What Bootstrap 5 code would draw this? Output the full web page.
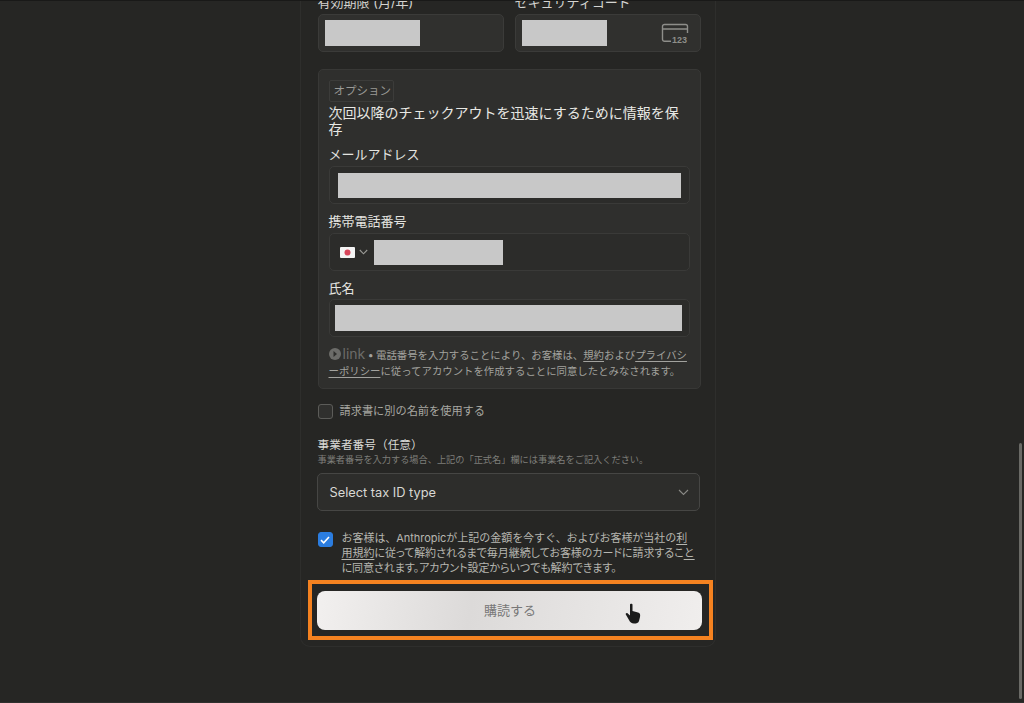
<!DOCTYPE html>
<html lang="ja">
<head>
<meta charset="utf-8">
<title>購読する</title>
<link href="https://cdn.jsdelivr.net/npm/bootstrap@5.3.0/dist/css/bootstrap.min.css" rel="stylesheet">
<style>
html,body{height:703px;overflow:hidden;background:#262624;}
body{font-family:"Inter","Noto Sans CJK JP",sans-serif;color:#dcdcd8;}
.viewport{height:703px;overflow:hidden;position:relative;padding-right:9px;border-top:1px solid #191918;border-bottom:1px solid #30302e;}
.pay-panel{width:416px;height:653px;margin-top:-7px;padding:0 15px 0 17px;border:1px solid #2e2e2c;border-top:0;border-radius:0 0 10px 10px;flex:none;}
.f-label{font-size:13px;line-height:16px;margin-bottom:4px;color:#d4d4d0;height:16px;white-space:nowrap;}
.field{height:38px;background:#30302e;border:1px solid #3b3b39;border-radius:5px;display:flex;align-items:center;}
.half{width:186px;padding-left:6px;}
.two-col{gap:11px;}
.redact{background:#c8c8c8;height:26px;}
.r1{width:95px;}.r2{width:85px;}
.card-ico{width:28px;height:20px;margin-right:11px;}
.opt-box{margin-top:17px;height:320px;padding:10px 10px;background:#2f2f2d;border:1px solid #383836;border-radius:5px;width:383px;}
.opt-tag{display:block;height:22px;line-height:20px;font-size:11.5px;padding:0 4px;width:65px;border:1px solid #3c3c3a;border-radius:2px;color:#9a9a96;white-space:nowrap;}
.opt-title{font-size:14px;line-height:16px;margin-top:3px;color:#e8e8e4;}
.inner-label{font-size:13px;line-height:16px;height:16px;color:#e4e4e0;white-space:nowrap;}
.inner-field{height:38px;background:#2c2c2a;border:1px solid #3a3a38;border-radius:5px;display:flex;align-items:center;width:361px;}
.m-a{margin-top:9px;margin-bottom:4px;}
.m-b{margin-top:9px;margin-bottom:4px;}
.m-c{margin-top:9px;margin-bottom:3px;}
.px-a{padding:0 8px;}.px-a .redact{width:343px;height:25px;}
.px-b{padding-left:10px;}.px-b .redact{width:129px;height:25px;}
.px-c{padding:0 7px 0 5px;}.px-c .redact{width:348px;}
.flag{width:15px;height:11px;margin-right:4px;}
.chev{width:9px;height:6px;margin-right:6px;}
.legal{font-size:10.4px;line-height:16px;margin-top:10px;color:#a2a29e;white-space:nowrap;}
.legal u{text-underline-offset:2px;}
.link-mark{font-size:14px;line-height:14px;color:#6c6c69;}
.link-ico{width:12px;height:12px;margin-right:2px;vertical-align:-1px;}
.box{width:15px;height:15px;border:1px solid #5c5c59;border-radius:3px;background:#30302e;flex:none;margin:0;}
.alt-row{margin-top:14px;height:16px;gap:7px;font-size:11.2px;color:#a8a8a2;white-space:nowrap;}
.tax-h{margin-top:19px;font-size:11.7px;line-height:15px;color:#dadad6;white-space:nowrap;}
.tax-s{font-size:9.2px;line-height:14px;color:#7e7e7a;white-space:nowrap;}
.tax-sel{margin-top:6px;margin-left:-1px;width:383px;height:38px;padding:1px 10px 0 12px;font-size:12.8px;color:#d8d8d4;background:#2d2d2b;border:1px solid #464644;border-radius:5px;}
.tax-sel svg{width:11px;height:7px;}
.terms{margin-top:20px;gap:9px;}
.terms-text{font-size:11px;line-height:15px;color:#b6b6b0;white-space:nowrap;letter-spacing:-.04px;}
.terms-text u{text-underline-offset:2px;}
.tight{font-feature-settings:"palt";}
.box-on{background:#2b7de0;border-color:#2b7de0;margin-top:1px;display:flex;align-items:center;justify-content:center;}
.box-on svg{width:10px;height:8px;}
.buy-wrap{position:relative;margin-top:15px;margin-left:-1px;width:385px;}
.buy{display:block;width:385px;height:39px;padding:0 0 0 2px;font-size:13px;color:#777;border:0;border-radius:8px;background:linear-gradient(100deg,#f2f0ef 0%,#dcdad9 40%,#e6e4e3 70%,#f0eeed 100%);}
.orange{position:absolute;left:-9px;top:-11px;width:405px;height:60px;border:4px solid #f58220;pointer-events:none;}
.hand{position:absolute;left:308px;top:12px;width:16px;height:21px;}
.sbar{position:absolute;right:2px;top:442px;width:3px;height:256px;background:#6a6a66;border-radius:2px;}
</style>
</head>
<body>
<div class="viewport d-flex justify-content-center">
  <main class="pay-panel">
    <div class="d-flex two-col">
      <div>
        <div class="f-label">有効期限 (月/年)</div>
        <div class="field half"><div class="redact r1"></div></div>
      </div>
      <div>
        <div class="f-label">セキュリティコード</div>
        <div class="field half justify-content-between"><div class="redact r2"></div>
          <svg class="card-ico" viewBox="0 0 28 20" fill="none" stroke="#8e8e8a" stroke-width="1.4"><path d="M10 18.300H3.500A2 2 0 0 1 1.500 16.300V3.500A2 2 0 0 1 3.500 1.500H24.500A2 2 0 0 1 26.500 3.500V10M1.500 6H26.500"/><text x="11" y="19.500" font-size="9" font-weight="700" fill="#8e8e8a" stroke="none" font-family="Liberation Sans,sans-serif">123</text></svg>
        </div>
      </div>
    </div>
    <section class="opt-box">
      <div class="opt-tag">オプション</div>
      <div class="opt-title">次回以降のチェックアウトを迅速にするために情報を保存</div>
      <div class="inner-label m-a">メールアドレス</div>
      <div class="inner-field px-a"><div class="redact"></div></div>
      <div class="inner-label m-b">携帯電話番号</div>
      <div class="inner-field px-b">
        <svg class="flag" viewBox="0 0 15 11"><rect width="15" height="11" rx="1" fill="#f4f4f4"/><circle cx="7.500" cy="5.500" r="3" fill="#d8455a"/></svg>
        <svg class="chev" viewBox="0 0 9 6" fill="none" stroke="#9a9a96" stroke-width="1.100"><path d="M.8 1 4.500 4.800 8.200 1"/></svg>
        <div class="redact"></div>
      </div>
      <div class="inner-label m-c">氏名</div>
      <div class="inner-field px-c"><div class="redact"></div></div>
      <div class="legal"><svg class="link-ico" viewBox="0 0 12 12"><circle cx="6" cy="6" r="6" fill="#6c6c69"/><path d="M4.500 3 8 6 4.500 9Z" fill="#2f2f2d"/></svg><span class="link-mark">link</span> <b>•</b> 電話番号を入力することにより、お客様は、<u>規約</u>および<u>プライバシ<br>ーポリシー</u>に従ってアカウントを作成することに同意したとみなされます。</div>
    </section>
    <div class="alt-row d-flex align-items-center"><span class="box"></span><span>請求書に別の名前を使用する</span></div>
    <div class="tax-h">事業者番号（任意）</div>
    <div class="tax-s">事業者番号を入力する場合、上記の「正式名」欄には事業名をご記入ください。</div>
    <div class="tax-sel d-flex align-items-center justify-content-between"><span>Select tax ID type</span>
      <svg viewBox="0 0 11 7" fill="none" stroke="#8a8a86" stroke-width="1.100"><path d="M1 1 5.500 5.500 10 1"/></svg></div>
    <div class="terms d-flex">
      <span class="box box-on"><svg viewBox="0 0 10 8" fill="none" stroke="#fff" stroke-width="1.600"><path d="M1 4.200 3.700 6.800 9 1"/></svg></span>
      <div class="terms-text">お客様は、Anthropicが上記の金額を今すぐ、およびお客様が当社の<u>利<br><span class="tight">用規約</span></u><span class="tight">に従って解約されるまで毎月継続してお客様のカードに請求するこ</span><u>と</u><br><span class="tight">に同意されます。アカウント設定からいつでも解約できます。</span></div>
    </div>
    <div class="buy-wrap">
      <button type="button" class="btn buy">購読する</button>
      <span class="orange"></span>
      <svg class="hand" viewBox="0 0 16 21"><path d="M5 1.500C5 .5 7.500 .5 7.500 1.500V8L13 9.500C15 10 15.500 11.500 15 14L14 18C13.500 20 11.500 20.500 9 20.500 6.500 20.500 5 19 4 17L.8 11.500C.3 10.500 1.500 9.500 2.500 10.200L5 12.500Z" fill="#1b1b1b"/></svg>
    </div>
  </main>
  <div class="sbar"></div>
</div>
<script src="https://cdn.jsdelivr.net/npm/bootstrap@5.3.0/dist/js/bootstrap.bundle.min.js"></script>
</body>
</html>
